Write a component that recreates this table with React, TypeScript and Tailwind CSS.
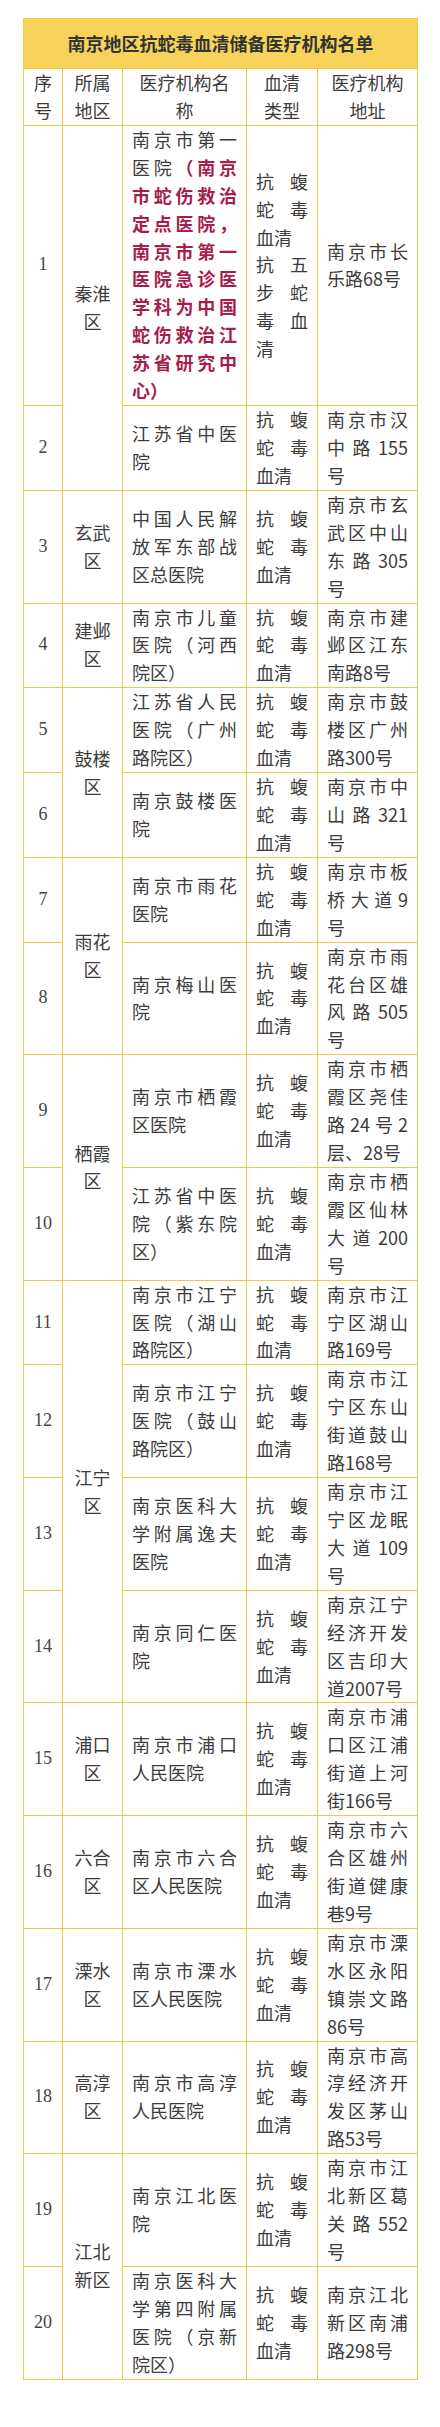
import type { ReactNode } from "react";

type Row = {
  no: number;
  district?: string;
  span?: number;
  name: ReactNode;
  serum: ReactNode;
  address: string;
};

const serum = "抗蝮蛇毒血清";

const rows: Row[] = [
  {
    no: 1,
    district: "秦淮区",
    span: 2,
    name: (
      <>
        南京市第一医院
        <span className="font-bold text-[#a81d4c]">
          （南京市蛇伤救治定点医院，南京市第一医院急诊医学科为中国蛇伤救治江苏省研究中心）
        </span>
      </>
    ),
    serum: (
      <>
        <p>抗蝮蛇毒血清</p>
        <p>抗五步蛇毒血清</p>
      </>
    ),
    address: "南京市长乐路68号",
  },
  { no: 2, name: "江苏省中医院", serum, address: "南京市汉中路155号" },
  { no: 3, district: "玄武区", span: 1, name: "中国人民解放军东部战区总医院", serum, address: "南京市玄武区中山东路305号" },
  { no: 4, district: "建邺区", span: 1, name: "南京市儿童医院（河西院区）", serum, address: "南京市建邺区江东南路8号" },
  { no: 5, district: "鼓楼区", span: 2, name: "江苏省人民医院（广州路院区）", serum, address: "南京市鼓楼区广州路300号" },
  { no: 6, name: "南京鼓楼医院", serum, address: "南京市中山路321号" },
  { no: 7, district: "雨花区", span: 2, name: "南京市雨花医院", serum, address: "南京市板桥大道9号" },
  { no: 8, name: "南京梅山医院", serum, address: "南京市雨花台区雄风路505号" },
  { no: 9, district: "栖霞区", span: 2, name: "南京市栖霞区医院", serum, address: "南京市栖霞区尧佳路24号2层、28号" },
  { no: 10, name: "江苏省中医院（紫东院区）", serum, address: "南京市栖霞区仙林大道200号" },
  { no: 11, district: "江宁区", span: 4, name: "南京市江宁医院（湖山路院区）", serum, address: "南京市江宁区湖山路169号" },
  { no: 12, name: "南京市江宁医院（鼓山路院区）", serum, address: "南京市江宁区东山街道鼓山路168号" },
  { no: 13, name: "南京医科大学附属逸夫医院", serum, address: "南京市江宁区龙眠大道109号" },
  { no: 14, name: "南京同仁医院", serum, address: "南京江宁经济开发区吉印大道2007号" },
  { no: 15, district: "浦口区", span: 1, name: "南京市浦口人民医院", serum, address: "南京市浦口区江浦街道上河街166号" },
  { no: 16, district: "六合区", span: 1, name: "南京市六合区人民医院", serum, address: "南京市六合区雄州街道健康巷9号" },
  { no: 17, district: "溧水区", span: 1, name: "南京市溧水区人民医院", serum, address: "南京市溧水区永阳镇崇文路86号" },
  { no: 18, district: "高淳区", span: 1, name: "南京市高淳人民医院", serum, address: "南京市高淳经济开发区茅山路53号" },
  { no: 19, district: "江北新区", span: 2, name: "南京江北医院", serum, address: "南京市江北新区葛关路552号" },
  { no: 20, name: "南京医科大学第四附属医院（京新院区）", serum, address: "南京江北新区南浦路298号" },
];

const cell = "border border-[#f1c942] px-[9px] py-0 align-middle";

export default function App() {
  return (
    <div className="min-h-[2427px] bg-white px-[23px] pt-[18px] font-['Noto_Sans_CJK_SC',sans-serif] text-[18px] leading-[27.92px] text-[#3c3c3c]">
      <table className="w-[394px] table-fixed border-collapse border border-[#f1c942]">
        <colgroup>
          <col className="w-[39px]" />
          <col className="w-[60px]" />
          <col className="w-[124px]" />
          <col className="w-[71px]" />
          <col className="w-[100px]" />
        </colgroup>
        <thead>
          <tr>
            <th
              colSpan={5}
              className="h-[50px] border border-[#f1c942] bg-[#f7d35c] text-center text-[18px] font-bold text-[#333]"
            >
              南京地区抗蛇毒血清储备医疗机构名单
            </th>
          </tr>
          <tr>
            <th className={`${cell} text-center font-normal`}>序号</th>
            <th className={`${cell} text-center font-normal`}>所属地区</th>
            <th className={`${cell} text-center font-normal`}>医疗机构名称</th>
            <th className={`${cell} text-center font-normal`}>血清类型</th>
            <th className={`${cell} text-center font-normal`}>医疗机构地址</th>
          </tr>
        </thead>
        <tbody>
          {rows.map((r) => (
            <tr key={r.no}>
              <td className={`${cell} px-0 text-center font-['Liberation_Serif',serif] text-[#444]`}>{r.no}</td>
              {r.district && (
                <td rowSpan={r.span} className={`${cell} text-center`}>
                  {r.district}
                </td>
              )}
              <td className={`${cell} text-justify`}>{r.name}</td>
              <td className={`${cell} text-justify`}>{r.serum}</td>
              <td className={`${cell} text-justify`}>{r.address}</td>
            </tr>
          ))}
        </tbody>
      </table>
    </div>
  );
}
